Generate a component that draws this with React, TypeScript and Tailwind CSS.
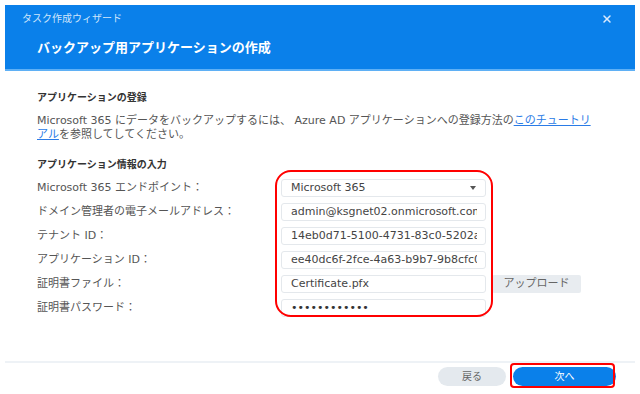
import { X } from 'lucide-react'

const FONT = { fontFamily: '"DejaVu Sans", "Noto Sans CJK JP", sans-serif' }

const FIELDS = [
  { label: 'Microsoft 365 エンドポイント：', value: 'Microsoft 365', select: true },
  { label: 'ドメイン管理者の電子メールアドレス：', value: 'admin@ksgnet02.onmicrosoft.com' },
  { label: 'テナント ID：', value: '14eb0d71-5100-4731-83c0-5202a1b3c4d5' },
  { label: 'アプリケーション ID：', value: 'ee40dc6f-2fce-4a63-b9b7-9b8cfc0d1e2f' },
  { label: '証明書ファイル：', value: 'Certificate.pfx', upload: true },
  { label: '証明書パスワード：', value: '••••••••••••', password: true },
]

export default function App() {
  return (
    <div className="w-[640px] h-[394px] bg-white px-[5px] pt-[5px] flex flex-col" style={FONT}>
      {/* Header */}
      <div className="h-[66px] bg-[#0a80ea] border-b-2 border-[#5fb0f5] flex flex-col px-[17px]">
        <div className="flex items-center justify-between h-[26px] pt-[1px]">
          <span className="text-[10px] text-[#cfe5fb]">タスク作成ウィザード</span>
          <X className="w-3 h-3 text-[#dbeafd] mr-[5px]" strokeWidth={3} />
        </div>
        <h1 className="pl-[15px] mt-[7px] text-[13px] font-bold text-white">バックアップ用アプリケーションの作成</h1>
      </div>

      {/* Body */}
      <div className="flex-1 px-[32px] pt-[19px]">
        <h2 className="text-[10px] font-bold text-[#333]">アプリケーションの登録</h2>
        <p className="mt-[9px] text-[11px] leading-[14px] text-[#555] w-[570px]">
          Microsoft 365 にデータをバックアップするには、 Azure AD アプリケーションへの登録方法の
          <span className="text-[#2a7be6] underline">このチュートリ<br />アル</span>を参照してしてください。
        </p>
        <h2 className="mt-[15px] text-[10px] font-bold text-[#333]">アプリケーション情報の入力</h2>

        <div className="relative mt-[7px] flex flex-col gap-[6px]">
          {FIELDS.map(f => (
            <div key={f.label} className="flex items-center h-[18px]">
              <span className="w-[244px] text-[11px] text-[#555]">{f.label}</span>
              <div className="w-[205px] h-[18px] border border-[#e4e8ec] rounded-[3px] bg-white flex items-center pl-[9px] pr-[8px] overflow-hidden">
                <span className={`flex-1 whitespace-nowrap overflow-hidden text-[11px] ${f.password ? 'text-[#333]' : 'text-[#444]'}`}>
                  {f.value}
                </span>
                {f.select && <span className="w-0 h-0 border-l-[3.5px] border-r-[3.5px] border-t-[4px] border-l-transparent border-r-transparent border-t-[#555] mr-[1px]" />}
              </div>
              {f.upload && (
                <div className="ml-[6px] w-[89px] h-[18px] bg-[#e8ecf0] rounded-[2px] flex items-center justify-center text-[11px] text-[#666]">
                  アップロード
                </div>
              )}
            </div>
          ))}
          {/* Annotation */}
          <div className="absolute left-[238px] top-[-9px] w-[218px] h-[147px] border-2 border-[#f00] rounded-[16px] pointer-events-none" />
        </div>
      </div>

      {/* Footer */}
      <div className="h-[33px] border-t-2 border-[#eef2f6] flex items-start pt-[4px] justify-end pr-[19px] gap-[7px]">
        <button className="w-[68px] h-[19px] rounded-full bg-[#e4e9ee] text-[10px] leading-none text-[#666]">戻る</button>
        <div className="relative flex">
          <button className="w-[103px] h-[19px] rounded-full bg-[#0a80ea] text-[10px] leading-none text-white">次へ</button>
          <div className="absolute left-[-3px] right-[1px] top-[-4px] bottom-[-2px] border-2 border-[#f00] rounded-[4px]" />
        </div>
      </div>
    </div>
  )
}
